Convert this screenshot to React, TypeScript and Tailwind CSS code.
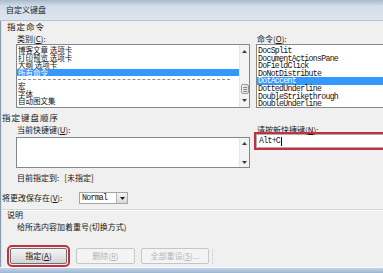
import React from "react";

// accelerator letter, underlined like the Win32 dialog
function Acc({ children }: { children: React.ReactNode }) {
  return <span className="underline underline-offset-[1px] decoration-[0.5px]">{children}</span>;
}

function Tri({ down, color = "#3c3c3c" }: { down?: boolean; color?: string }) {
  return (
    <svg width="5" height="3" viewBox="0 0 5 3">
      <path d={down ? "M0 0H5L2.5 3Z" : "M0 3H5L2.5 0Z"} fill={color} />
    </svg>
  );
}

function ScrollBar({ thumb, btn }: { thumb?: boolean; btn: string }) {
  return (
    <div className="w-[10px] shrink-0 flex flex-col bg-[#f3f3f3] border-l border-[#e6e6e6]">
      <div className={`${btn} flex items-center justify-center`}>
        <Tri />
      </div>
      <div className="flex-1 flex flex-col justify-end items-center">
        {thumb && (
          <div className="w-[8px] h-[10px] rounded-[2px] border border-[#9a9a9a] bg-linear-to-r from-[#f4f4f4] to-[#dcdcdc] flex flex-col items-center justify-center gap-px">
            <div className="w-[4px] h-px bg-[#8a8a8a]" />
            <div className="w-[4px] h-px bg-[#8a8a8a]" />
            <div className="w-[4px] h-px bg-[#8a8a8a]" />
          </div>
        )}
      </div>
      <div className={`${btn} flex items-center justify-center`}>
        <Tri down />
      </div>
    </div>
  );
}

const categories = ["博客文章 选项卡", "打印预览 选项卡", "大纲 选项卡"];
const moreCategories = ["宏", "字体", "自动图文集"];
const commands = [
  "DocSplit",
  "DocumentActionsPane",
  "DoFieldClick",
  "DoNotDistribute",
  "DotAccent",
  "DottedUnderline",
  "DoubleStrikethrough",
  "DoubleUnderline",
];

export default function App() {
  return (
    <div className="w-[383px] h-[273px] overflow-hidden flex flex-col bg-[#f0f0f0] font-['Noto_Sans_CJK_SC',sans-serif] text-[8px] text-[#141414]">
      {/* TITLE BAR */}
      <div className="h-[21px] shrink-0 flex items-center pl-[6px] border-b border-[#b7c4d3] bg-linear-to-b from-[#a9b9cc] via-[#d3dde8] via-30% to-[#dde5ef] text-[#1b1b1b]">
        自定义键盘
      </div>

      <div className="flex-1 min-h-0 flex">
        <div className="w-[2px] shrink-0 border-l border-[#8a9bb0] bg-[#dbe4ee]" />

        <div className="flex-1 min-w-0 flex flex-col leading-[10px]">
          {/* 指定命令 */}
          <div className="ml-[5px] h-[10px] text-[8.5px] tracking-[1px]">指定命令</div>

          <div className="mt-[3px] ml-[14px] flex gap-[6px]">
            <div className="w-[234px] shrink-0">
              <div className="h-[10px] pl-[1px]">
                类别(<Acc>C</Acc>):
              </div>
              <div className="h-[64px] border border-[#828790] bg-white flex">
                <div className="flex-1 pt-[1px] text-[7.5px] leading-[7.5px] overflow-hidden">
                  {categories.map((c) => (
                    <div key={c} className="pl-[1px] whitespace-pre">
                      {c}
                    </div>
                  ))}
                  <div className="pl-[1px] bg-[#3399ff] text-white">所有命令</div>
                  <div className="h-[6px] flex items-center pl-[1px]">
                    <div className="w-[212px] border-t border-dashed border-[#8c8c8c]" />
                  </div>
                  {moreCategories.map((c) => (
                    <div key={c} className="pl-[1px]">
                      {c}
                    </div>
                  ))}
                </div>
                <ScrollBar thumb btn="h-[13px]" />
              </div>
            </div>

            <div className="w-[140px] shrink-0">
              <div className="h-[10px] pl-[1px]">
                命令(<Acc>O</Acc>):
              </div>
              <div className="h-[64px] border border-[#828790] bg-white pt-[2px] overflow-hidden font-['Liberation_Mono',monospace] text-[8.2px] tracking-[-0.7px] leading-[7.6px]">
                {commands.map((c) => (
                  <div key={c} className={c === "DotAccent" ? "pl-[1px] bg-[#3399ff] text-white" : "pl-[1px]"}>
                    {c}
                  </div>
                ))}
              </div>
            </div>
          </div>

          {/* 指定键盘顺序 */}
          <div className="mt-[4px] h-[10px] text-[8.5px] tracking-[1px]">指定键盘顺序</div>

          <div className="mt-[3px] ml-[14px] flex gap-[6px]">
            <div className="w-[234px] shrink-0">
              <div className="h-[10px] pl-[1px]">
                当前快捷键(<Acc>U</Acc>):
              </div>
              <div className="mt-[2px] h-[31px] border border-[#828790] bg-white flex">
                <div className="flex-1" />
                <ScrollBar btn="h-[10px]" />
              </div>
              <div className="mt-[5px] h-[10px] pl-[1px] flex gap-[5px]">
                <span>目前指定到:</span>
                <span>[未指定]</span>
              </div>
            </div>

            <div className="w-[140px] shrink-0">
              <div className="h-[9px] pl-[1px]">
                请按新快捷键(<Acc>N</Acc>):
              </div>
              <div className="h-[14px] bg-white border border-[#abadb3] outline-2 outline-[#c3303f] flex items-center pl-[2px] font-['Liberation_Mono',monospace] text-[8.2px] tracking-[-0.7px]">
                Alt+C
                <span className="ml-[1px] w-px h-[9px] bg-black" />
              </div>
            </div>
          </div>

          {/* 将更改保存在 */}
          <div className="mt-[9px] h-[12px] flex items-center">
            <div className="w-[77px] shrink-0">
              将更改保存在(<Acc>V</Acc>):
            </div>
            <div className="w-[49px] h-[12px] bg-white border border-[#a5a5a5] flex">
              <div className="flex-1 pl-[2px] leading-[10px] font-['Liberation_Mono',monospace] text-[8.2px] tracking-[-0.7px]">
                Normal
              </div>
              <div className="w-[11px] border-l border-[#b5b5b5] bg-linear-to-b from-[#f4f4f4] to-[#d8d8d8] flex items-center justify-center">
                <Tri down color="#202020" />
              </div>
            </div>
          </div>

          <div className="mt-[5px] h-[2px] border-t border-[#d5d5d5] border-b border-b-white" />

          {/* 说明 */}
          <div className="ml-[5px] h-[8px] leading-[8px]">说明</div>
          <div className="mt-[3px] ml-[15px] h-[10px]">给所选内容加着重号(切换方式)</div>

          {/* BUTTONS */}
          <div className="mt-[16px] ml-[8px] flex items-center">
            <button className="w-[57px] h-[16px] rounded-[2px] border border-[#707070] bg-linear-to-b from-[#f3f3f3] via-[#e6e6e6] to-[#d3d3d3] outline-2 outline-offset-[1px] outline-[#c3303f] leading-[14px]">
              指定(<Acc>A</Acc>)
            </button>
            <button className="ml-[9px] w-[59px] h-[16px] rounded-[2px] border border-[#c4c7ca] bg-[#f4f4f4] text-[#b4b4b4] leading-[14px]">
              删除(<Acc>R</Acc>)
            </button>
            <button className="ml-[6px] w-[68px] h-[16px] rounded-[2px] border border-[#c4c7ca] bg-[#f4f4f4] text-[#b4b4b4] leading-[14px]">
              全部重设(<Acc>S</Acc>)...
            </button>
            <div className="ml-[3px] h-[15px] border-l border-dotted border-[#c4c4c4]" />
          </div>
        </div>
      </div>

      {/* BOTTOM FRAME */}
      <div className="h-[6px] shrink-0 border-t border-[#f5f8fc] bg-linear-to-b from-[#c5d5e8] to-[#9cb4d1]" />
    </div>
  );
}
